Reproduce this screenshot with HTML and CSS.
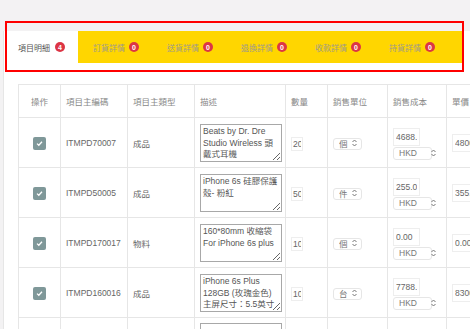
FILE: index.html
```
<html lang="zh-Hant">
<head>
    <meta charset="UTF-8">
    <meta name="viewport" content="width=device-width, initial-scale=1.0">
    <title>項目明細</title>
    <link rel="stylesheet" href="styles.css">
</head>
<body>
<div class="page">
    <div class="panel">
        <div class="tabs">
            <div class="tab active">項目明細<span class="badge">4</span></div>
            <div class="tab">訂貨詳情<span class="badge">0</span></div>
            <div class="tab">送貨詳情<span class="badge">0</span></div>
            <div class="tab">退換詳情<span class="badge">0</span></div>
            <div class="tab">收款詳情<span class="badge">0</span></div>
            <div class="tab">持貨詳情<span class="badge">0</span></div>
        </div>

        <table class="items">
            <colgroup>
                <col style="width: 42px">
                <col style="width: 67px">
                <col style="width: 67px">
                <col style="width: 91px">
                <col style="width: 42px">
                <col style="width: 60px">
                <col style="width: 59px">
                <col style="width: 60px">
            </colgroup>
            <thead>
                <tr>
                    <th class="c-op">操作</th>
                    <th>項目主編碼</th>
                    <th>項目主類型</th>
                    <th>描述</th>
                    <th>數量</th>
                    <th>銷售單位</th>
                    <th>銷售成本</th>
                    <th>單價</th>
                </tr>
            </thead>
            <tbody>
                <tr>
                    <td class="c-op"><span class="check"><svg width="9" height="9" viewBox="0 0 9 9"><path d="M2 4.6 L3.8 6.3 L7 2.8" fill="none" stroke="#fff" stroke-width="1.3"/></svg></span></td>
                    <td>ITMPD70007</td>
                    <td>成品</td>
                    <td><textarea>Beats by Dr. Dre Studio Wireless 頭戴式耳機</textarea></td>
                    <td><input class="qty" type="text" value="20"></td>
                    <td><span class="sel unit"><select><option>個</option></select><svg class="arrows" width="5" height="8" viewBox="0 0 5 8"><path d="M0.5 3 L2.5 1 L4.5 3 M0.5 5 L2.5 7 L4.5 5" fill="none" stroke="#777" stroke-width="1"/></svg></span></td>
                    <td><input class="cost" type="text" value="4688.00"><span class="sel cur"><select><option>HKD</option></select><svg class="arrows" width="5" height="8" viewBox="0 0 5 8"><path d="M0.5 3 L2.5 1 L4.5 3 M0.5 5 L2.5 7 L4.5 5" fill="none" stroke="#777" stroke-width="1"/></svg></span></td>
                    <td><input class="price" type="text" value="4800.00"></td>
                </tr>
                <tr>
                    <td class="c-op"><span class="check"><svg width="9" height="9" viewBox="0 0 9 9"><path d="M2 4.6 L3.8 6.3 L7 2.8" fill="none" stroke="#fff" stroke-width="1.3"/></svg></span></td>
                    <td>ITMPD50005</td>
                    <td>成品</td>
                    <td><textarea>iPhone 6s 硅膠保護殼- 粉紅</textarea></td>
                    <td><input class="qty" type="text" value="50"></td>
                    <td><span class="sel unit"><select><option>件</option></select><svg class="arrows" width="5" height="8" viewBox="0 0 5 8"><path d="M0.5 3 L2.5 1 L4.5 3 M0.5 5 L2.5 7 L4.5 5" fill="none" stroke="#777" stroke-width="1"/></svg></span></td>
                    <td><input class="cost" type="text" value="255.00"><span class="sel cur"><select><option>HKD</option></select><svg class="arrows" width="5" height="8" viewBox="0 0 5 8"><path d="M0.5 3 L2.5 1 L4.5 3 M0.5 5 L2.5 7 L4.5 5" fill="none" stroke="#777" stroke-width="1"/></svg></span></td>
                    <td><input class="price" type="text" value="355.00"></td>
                </tr>
                <tr>
                    <td class="c-op"><span class="check"><svg width="9" height="9" viewBox="0 0 9 9"><path d="M2 4.6 L3.8 6.3 L7 2.8" fill="none" stroke="#fff" stroke-width="1.3"/></svg></span></td>
                    <td>ITMPD170017</td>
                    <td>物料</td>
                    <td><textarea>160*80mm 收縮袋 For iPhone 6s plus</textarea></td>
                    <td><input class="qty" type="text" value="10"></td>
                    <td><span class="sel unit"><select><option>個</option></select><svg class="arrows" width="5" height="8" viewBox="0 0 5 8"><path d="M0.5 3 L2.5 1 L4.5 3 M0.5 5 L2.5 7 L4.5 5" fill="none" stroke="#777" stroke-width="1"/></svg></span></td>
                    <td><input class="cost" type="text" value="0.00"><span class="sel cur"><select><option>HKD</option></select><svg class="arrows" width="5" height="8" viewBox="0 0 5 8"><path d="M0.5 3 L2.5 1 L4.5 3 M0.5 5 L2.5 7 L4.5 5" fill="none" stroke="#777" stroke-width="1"/></svg></span></td>
                    <td><input class="price" type="text" value="0.00"></td>
                </tr>
                <tr>
                    <td class="c-op"><span class="check"><svg width="9" height="9" viewBox="0 0 9 9"><path d="M2 4.6 L3.8 6.3 L7 2.8" fill="none" stroke="#fff" stroke-width="1.3"/></svg></span></td>
                    <td>ITMPD160016</td>
                    <td>成品</td>
                    <td><textarea>iPhone 6s Plus 128GB (玫瑰金色) 主屏尺寸：5.5英寸</textarea></td>
                    <td><input class="qty" type="text" value="10"></td>
                    <td><span class="sel unit"><select><option>台</option></select><svg class="arrows" width="5" height="8" viewBox="0 0 5 8"><path d="M0.5 3 L2.5 1 L4.5 3 M0.5 5 L2.5 7 L4.5 5" fill="none" stroke="#777" stroke-width="1"/></svg></span></td>
                    <td><input class="cost" type="text" value="7788.00"><span class="sel cur"><select><option>HKD</option></select><svg class="arrows" width="5" height="8" viewBox="0 0 5 8"><path d="M0.5 3 L2.5 1 L4.5 3 M0.5 5 L2.5 7 L4.5 5" fill="none" stroke="#777" stroke-width="1"/></svg></span></td>
                    <td><input class="price" type="text" value="8300.00"></td>
                </tr>
                <tr class="last">
                    <td class="c-op"></td>
                    <td></td>
                    <td></td>
                    <td><textarea></textarea></td>
                    <td></td>
                    <td></td>
                    <td></td>
                    <td></td>
                </tr>
            </tbody>
        </table>
    </div>

    <!-- highlight box drawn over the tab bar -->
    <div class="highlight"></div>
</div>
</body>
</html>
```

FILE: styles.css
```
    html, body {
        overflow: hidden;
    }
    body {
        font-family: "Liberation Sans", "Noto Sans CJK TC", sans-serif;
        margin: 0;
        padding: 0;
        background-color: #f3f2f3;
        color: #666;
    }
    .page {
        position: relative;
        padding: 31px 0 0 3px;
    }
    .panel {
        background-color: #fff;
        border-left: 1px solid #e6e6e6;
        height: 400px;
    }
    .tabs {
        display: flex;
        width: 458px;
        height: 32px;
        background-color: #ffd600;
    }
    .tab {
        display: flex;
        align-items: center;
        width: 74px;
        box-sizing: border-box;
        padding-left: 15px;
        font-size: 8px;
        color: #a09a8a;
    }
    .tab.active {
        background-color: #fff;
        color: #555;
        padding-left: 14px;
    }
    .badge {
        display: inline-flex;
        align-items: center;
        justify-content: center;
        width: 10px;
        height: 10px;
        margin-left: 4px;
        border-radius: 50%;
        background-color: #dc3545;
        color: #fff;
        font-family: "Liberation Sans", sans-serif;
        font-size: 7px;
        font-weight: bold;
    }
    .tab.active .badge {
        margin-left: 5px;
    }
    .items {
        margin: 21px 0 0 14px;
        border-collapse: collapse;
        table-layout: fixed;
        width: 488px;
        font-size: 8.5px;
    }
    .items th, .items td {
        border: 1px solid #e6e6e6;
        padding: 0 5px;
        text-align: left;
        vertical-align: middle;
        white-space: nowrap;
        overflow: hidden;
    }
    .items th {
        height: 33px;
        font-weight: normal;
        color: #888;
    }
    .items td {
        height: 50px;
    }
    .items .c-op {
        text-align: center;
        padding: 0;
    }
    .items .last td {
        vertical-align: top;
        padding-top: 4px;
    }
    .check {
        display: inline-flex;
        align-items: center;
        justify-content: center;
        width: 13px;
        height: 13px;
        margin-top: 2px;
        border-radius: 2px;
        background-color: #7f9899;
        vertical-align: middle;
    }
    textarea {
        display: block;
        width: 82px;
        height: 38px;
        margin-top: 1px;
        padding: 1px 2px;
        box-sizing: border-box;
        border: 1px solid #a8a8a8;
        font-family: "Liberation Sans", "Noto Sans CJK TC", sans-serif;
        font-size: 8.5px;
        line-height: 11.5px;
        color: #555;
        overflow: hidden;
    }
    input[type="text"] {
        box-sizing: border-box;
        border: 1px solid #eee;
        padding: 0 2px;
        font-family: "Liberation Sans", sans-serif;
        font-size: 8.5px;
        color: #666;
        background-color: #fff;
    }
    input.qty {
        width: 12px;
        height: 14px;
        padding: 0 1px;
        margin-top: 2px;
    }
    input.cost {
        display: block;
        width: 27px;
        height: 18px;
        margin-top: 2px;
    }
    input.price {
        width: 60px;
        height: 18px;
    }
    .sel {
        position: relative;
        display: inline-block;
    }
    .sel select {
        -webkit-appearance: none;
        appearance: none;
        box-sizing: border-box;
        border: 1px solid #e6e6e6;
        border-radius: 3px;
        background-color: #fff;
        font-family: "Liberation Sans", "Noto Sans CJK TC", sans-serif;
        font-size: 8.5px;
        color: #777;
        padding: 0 0 0 5px;
    }
    .sel .arrows {
        position: absolute;
        right: 5px;
        top: 50%;
        margin-top: -4px;
    }
    .unit select {
        width: 29px;
        height: 12px;
        line-height: 10px;
        margin-top: 2px;
    }
    .cur {
        display: block;
        margin-top: 1px;
    }
    .cur select {
        width: 39px;
        height: 13px;
        line-height: 11px;
    }
    .highlight {
        position: absolute;
        left: 5px;
        top: 21px;
        width: 459px;
        height: 51px;
        box-sizing: border-box;
        border: 2px solid #f00;
    }
```
